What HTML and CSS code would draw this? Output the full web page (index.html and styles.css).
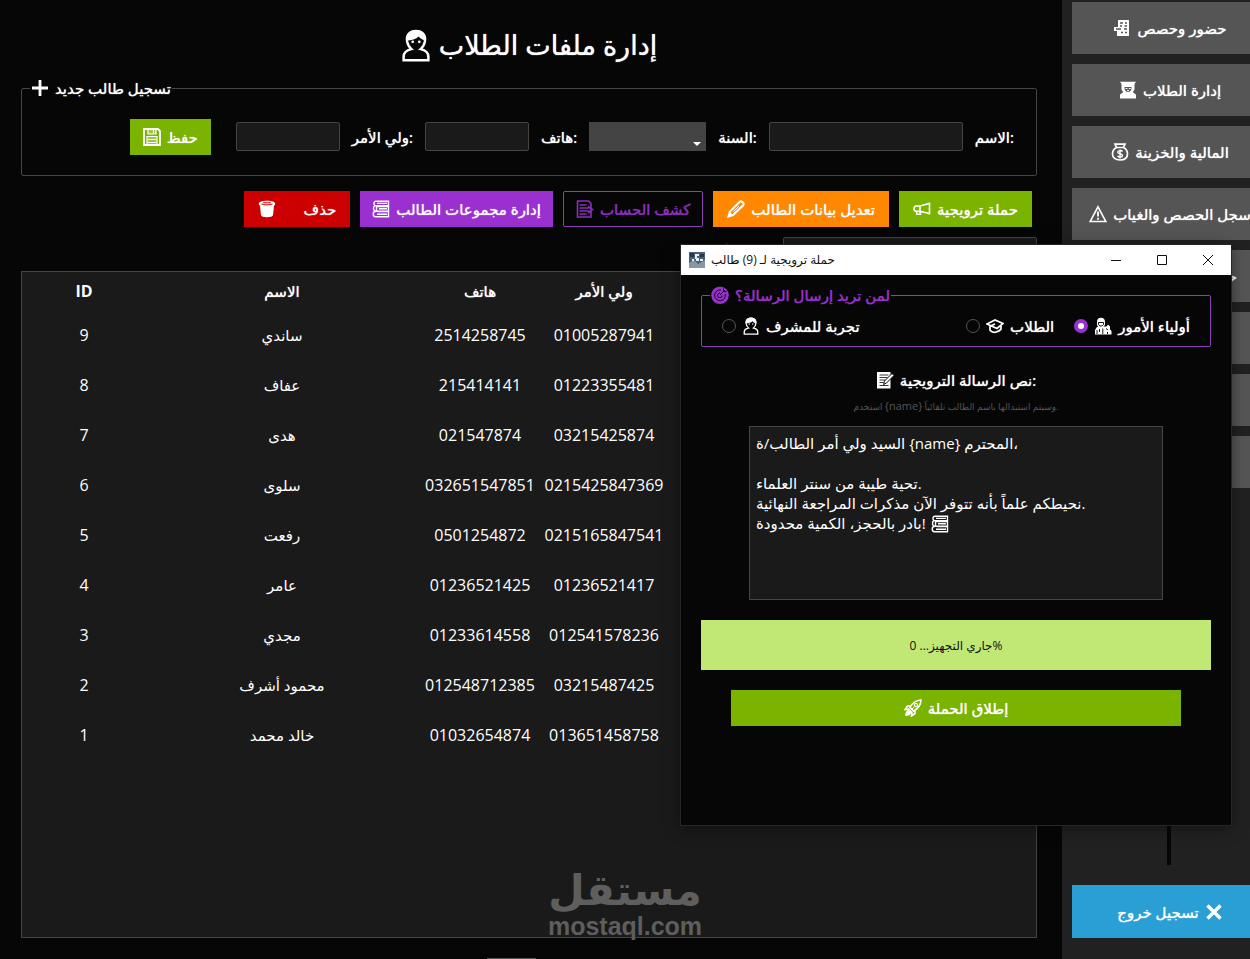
FILE: index.html
```html
<!DOCTYPE html>
<html lang="ar" dir="ltr">
<head>
    <meta charset="UTF-8">
    <meta name="viewport" content="width=device-width, initial-scale=1.0">
    <title>إدارة ملفات الطلاب</title>
    <link rel="stylesheet" href="styles.css">
</head>
<body>
    <!-- Icon set -->
    <svg class="sprite" aria-hidden="true">
        <symbol id="i-person" viewBox="0 0 18 20">
            <path d="M3.600 7.500C3 3.500 5.500 1.200 9 1.200s6 2.300 5.400 6.300c-.4 2.200-1.400 3.700-2.600 4.700 2.800.6 4.700 2 4.700 4.600v2.200H1.500v-2.200c0-2.600 1.900-4 4.700-4.600-1.200-1-2.200-2.500-2.600-4.700z" fill="none" stroke="currentColor" stroke-width="1.500"/>
            <path d="M3 7C2.600 3 5.500.6 9 .6s6.400 2.400 6 6.400c-1.800-.3-3.400-1-4.400-2.400C9 6.200 6.500 7 3 7z" fill="currentColor"/>
            <circle cx="7" cy="7.800" r=".8" fill="currentColor"/><circle cx="11" cy="7.800" r=".8" fill="currentColor"/>
        </symbol>
        <symbol id="i-plus" viewBox="0 0 18 18"><path d="M9 1v16M1 9h16" stroke="currentColor" stroke-width="2.800"/></symbol>
        <symbol id="i-save" viewBox="0 0 18 18">
            <path d="M1 1h14l2 2v14H1z" fill="none" stroke="currentColor" stroke-width="1.800"/>
            <path d="M5 1h8v5H5zM4 8h10v9H4z" fill="currentColor" fill-opacity=".25"/>
            <path d="M5 1v5h8V1M10.500 2v3M4 17V8.500h10V17M5 11.500h8M5 14.500h8" fill="none" stroke="currentColor" stroke-width="1.200"/>
        </symbol>
        <symbol id="i-horn" viewBox="0 0 18 18">
            <path d="M16.500 2.500v12M16 3.500L7 6H3.500Q1 6.200 1 8.700t2.500 2.600H7l9 2.200M7 6v5.300M3.300 11.300l.7 3h3.500l-.7-3" fill="none" stroke="currentColor" stroke-width="1.600"/>
        </symbol>
        <symbol id="i-pencil" viewBox="0 0 18 18">
            <path d="M1.500 16.500l1.300-4.800L12.500 2q1.500-1.300 2.800 0l.7.700q1.300 1.400 0 2.800L6 15z" fill="none" stroke="currentColor" stroke-width="2"/>
            <path d="M1 17l1.500-5L6 15z" fill="currentColor"/>
            <path d="M6.500 11.500L12 6" stroke="currentColor" stroke-width="1"/>
        </symbol>
        <symbol id="i-sheet" viewBox="0 0 18 18">
            <path d="M3 1h9.500l2.500 2.500V17H1.500V1zM3.500 5h7M3.500 8h9M3.500 11h9M3.500 14h7M12 6.500l4.500 3L12 13" fill="none" stroke="currentColor" stroke-width="1.600"/>
        </symbol>
        <symbol id="i-books" viewBox="0 0 18 18">
            <path d="M16.500 1.200H4Q2 1.200 2 3.400t2 2.200h12.500zM16.500 6.500H4.500v4.700h12zM6 11.500h10.500V16.800H3.500Q1.200 16.500 1.200 14T3.500 11.500M2.800 5.600Q1.200 7 1.500 9t3 2.300M5 3.400h10M7 8.800h8M5 14.200h10" fill="none" stroke="currentColor" stroke-width="1.400"/>
        </symbol>
        <symbol id="i-trash" viewBox="0 0 18 18">
            <path d="M.8 3.800C.8 1.800 4 .8 9 .8s8.200 1 8.200 3c0 1-.5 1.500-1.200 2l-1 9.500c-.3 1.300-2.600 2-6 2s-5.700-.7-6-2L2 5.800c-.7-.5-1.200-1-1.200-2z" fill="currentColor"/>
            <path d="M3.500 4c2 1.200 9 1.200 11 0M5 2.800h8" fill="none" stroke="#c00" stroke-width="1"/>
        </symbol>
        <symbol id="i-search" viewBox="0 0 18 18"><circle cx="9" cy="7" r="5.500" fill="none" stroke="currentColor" stroke-width="1.600"/><path d="M13 11l4 5" stroke="currentColor" stroke-width="2"/></symbol>
        <symbol id="i-attend" viewBox="0 0 18 18">
            <path d="M5 1h11v16H4v-5H1V8h4z" fill="currentColor"/>
            <path d="M7 4h3M12 4h2M7 7h2M11.500 7H14M3 10h5M11 10h3M8 13.500h2M12 13.500h2" stroke="#555" stroke-width="1.300"/>
        </symbol>
        <symbol id="i-teacher" viewBox="0 0 18 18">
            <path d="M1 .8h16L15.500 3v5.500l-1.700 2.800L17 13.500V17.500H1v-4l3.200-2.200L2.500 8.500V3z" fill="currentColor"/>
            <path d="M5.500 6h7c.2 3-1.300 5-3.500 5S5.300 9 5.500 6z" fill="#555"/>
            <path d="M6.500 7.500h2M9.800 7.500h2M8 9.500h2" stroke="#fff" stroke-width="1"/>
        </symbol>
        <symbol id="i-money" viewBox="0 0 18 18">
            <path d="M4 1.200h10l-1.500 3.300C15 5.800 16.500 8 16.500 11c0 3.800-3 6-7.500 6s-7.500-2.200-7.500-6c0-3 1.500-5.200 4-6.500zM5 4.500h8" fill="none" stroke="currentColor" stroke-width="1.700"/>
            <path d="M11.500 8.500C10.500 7 6.700 7.300 6.700 9.200s4.800 1.200 4.800 3.200-4 2.200-5 .5M9 6.500v9" fill="none" stroke="currentColor" stroke-width="1.400"/>
        </symbol>
        <symbol id="i-warn" viewBox="0 0 18 18">
            <path d="M9 1.800L16.800 16.500H1.200z" fill="none" stroke="currentColor" stroke-width="1.600"/>
            <path d="M9 6.500v5M9 12.800v2" stroke="currentColor" stroke-width="1.800"/>
        </symbol>
        <symbol id="i-cross" viewBox="0 0 18 18"><path d="M2.500 2.500l13 13M15.500 2.500l-13 13" stroke="currentColor" stroke-width="3.400"/></symbol>
        <symbol id="i-target" viewBox="0 0 18 18">
            <circle cx="9" cy="9.200" r="8.800" fill="currentColor"/>
            <path d="M14.200 8A5.400 5.400 0 1 1 10 4M11.300 9.500A2.400 2.400 0 1 1 9 7M9 9l5-5M12.500 2.500v3h3" fill="none" stroke="#060606" stroke-width=".9"/>
        </symbol>
        <symbol id="i-parents" viewBox="0 0 18 18">
            <path d="M3 5C3 2.200 4.700.8 7 .8s4 1.400 4 4.200v3l-1.600 1.600H12.500L14 7.500l2 2v3l1.500 1.500v3.500H1V13l1.500-2.500L4 9.500 3 8z" fill="currentColor"/>
            <path d="M4.500 5.500h5v2L8 9H6L4.500 7.500zM3 13v4M5.500 12v3M8.800 11.500v5.500M12 11.500l2 1.500M13.500 15v2" fill="none" stroke="#060606" stroke-width=".9"/>
        </symbol>
        <symbol id="i-cap" viewBox="0 0 18 18">
            <path d="M1 7l8-4 8 3.500-6 5zM4 8.800v4.400q2.500 3 6 1.800 4-1 5-3V8M9 7l-5.500 2.500" fill="none" stroke="currentColor" stroke-width="1.700"/>
        </symbol>
        <symbol id="i-memo" viewBox="0 0 18 18">
            <path d="M1 1h13.500v16.500H1z" fill="currentColor"/>
            <path d="M3.500 4h9M3.500 6.500h8M3.500 9h6M3.500 11.500h4M3.500 14.500h9" stroke="#060606" stroke-width=".8"/>
            <path d="M7.500 13.500l1-3.500 7.500-7.500 2 2-7.500 7.500z" fill="currentColor" stroke="#060606" stroke-width="1"/>
        </symbol>
        <symbol id="i-rocket" viewBox="0 0 18 18">
            <path d="M6 8.500C8.500 3.500 12 1.300 17 1c-.2 5-2.500 8.500-7.500 11zM7 7H3.500L1.200 10.500 5 10M11 11v3.500L7.500 17 8 13" fill="none" stroke="currentColor" stroke-width="1.600"/>
            <path d="M5 9.500L8.500 13 5 16.500 1 17l.8-4z" fill="currentColor"/>
            <circle cx="12" cy="6" r="1.600" fill="none" stroke="currentColor" stroke-width="1.200"/><path d="M7 11l3-3" stroke="currentColor"/>
        </symbol>
        <symbol id="i-app" viewBox="0 0 16 16">
            <path d="M0 0h16v16H0z" fill="#4a6076"/>
            <path d="M0 11l5-3 4 4 7-4v8H0z" fill="#8797a5"/>
            <path d="M1 1h4v4H1zM11 2h4v3h-4z" fill="#25364a"/>
            <path d="M6 2h4v2H8v2h2v3H7V7H6zM11 7h3v2h-3zM3 7h2v2H3z" fill="#e2eef8"/>
        </symbol>
    </svg>

    <div class="app">
        <main class="main">
            <h1 class="title strong"><svg class="icon icon-lg"><use href="#i-person"/></svg>إدارة ملفات الطلاب</h1>

            <form class="register">
                <fieldset class="group">
                    <legend class="strong"><svg class="icon"><use href="#i-plus"/></svg>تسجيل طالب جديد</legend>
                    <div class="fields strong">
                        <button type="button" class="btn green save"><svg class="icon"><use href="#i-save"/></svg>حفظ</button>
                        <input type="text" id="parent" class="field"><label for="parent">ولي الأمر:</label>
                        <input type="text" id="phone" class="field"><label for="phone">هاتف:</label>
                        <span class="select-wrap"><select id="year" class="field"><option></option></select></span><label for="year">السنة:</label>
                        <input type="text" id="name" class="field wide"><label for="name">الاسم:</label>
                    </div>
                </fieldset>
            </form>

            <div class="actions strong">
                <button class="btn red delete"><svg class="icon"><use href="#i-trash"/></svg>حذف</button>
                <button class="btn purple"><svg class="icon"><use href="#i-books"/></svg>إدارة مجموعات الطالب</button>
                <button class="btn outline"><svg class="icon"><use href="#i-sheet"/></svg>كشف الحساب</button>
                <button class="btn orange"><svg class="icon"><use href="#i-pencil"/></svg>تعديل بيانات الطالب</button>
                <button class="btn green"><svg class="icon"><use href="#i-horn"/></svg>حملة ترويجية</button>
            </div>

            <div class="search">
                <label for="search"><svg class="icon"><use href="#i-search"/></svg></label>
                <input type="search" id="search" class="field">
            </div>

            <div class="panel">
                <table>
                    <colgroup><col class="c-id"><col class="c-name"><col class="c-num"><col class="c-num"><col></colgroup>
                    <thead class="strong">
                        <tr><th class="latin">ID</th><th>الاسم</th><th>هاتف</th><th>ولي الأمر</th><th></th></tr>
                    </thead>
                    <tbody>
                        <tr><td>9</td><td class="name">ساندي</td><td>2514258745</td><td>01005287941</td><td></td></tr>
                        <tr><td>8</td><td class="name">عفاف</td><td>215414141</td><td>01223355481</td><td></td></tr>
                        <tr><td>7</td><td class="name">هدى</td><td>021547874</td><td>03215425874</td><td></td></tr>
                        <tr><td>6</td><td class="name">سلوى</td><td>032651547851</td><td>0215425847369</td><td></td></tr>
                        <tr><td>5</td><td class="name">رفعت</td><td>0501254872</td><td>0215165847541</td><td></td></tr>
                        <tr><td>4</td><td class="name">عامر</td><td>01236521425</td><td>01236521417</td><td></td></tr>
                        <tr><td>3</td><td class="name">مجدي</td><td>01233614558</td><td>012541578236</td><td></td></tr>
                        <tr><td>2</td><td class="name">محمود أشرف</td><td>012548712385</td><td>03215487425</td><td></td></tr>
                        <tr><td>1</td><td class="name">خالد محمد</td><td>01032654874</td><td>013651458758</td><td></td></tr>
                    </tbody>
                </table>
            </div>
        </main>

        <aside class="sidebar strong">
            <nav class="menu">
                <button><svg class="icon"><use href="#i-attend"/></svg>حضور وحصص</button>
                <button><svg class="icon"><use href="#i-teacher"/></svg>إدارة الطلاب</button>
                <button><svg class="icon"><use href="#i-money"/></svg>المالية والخزينة</button>
                <button><svg class="icon"><use href="#i-warn"/></svg>سجل الحصص والغياب</button>
                <button class="covered">حـ</button>
                <button></button>
                <button></button>
                <button></button>
            </nav>
            <div class="track"></div>
            <button class="logout"><svg class="icon"><use href="#i-cross"/></svg>تسجيل خروج</button>
        </aside>
    </div>

    <!-- Campaign window -->
    <div class="window" role="dialog" aria-labelledby="win-title">
        <div class="titlebar">
            <svg class="app-icon"><use href="#i-app"/></svg>
            <span id="win-title">حملة ترويجية لـ (9) طالب</span>
            <button aria-label="تصغير"><svg viewBox="0 0 12 12"><path d="M1 6.500h10"/></svg></button>
            <button aria-label="تكبير"><svg viewBox="0 0 12 12"><path d="M1.500 1.500h9v9h-9z"/></svg></button>
            <button aria-label="إغلاق"><svg viewBox="0 0 12 12"><path d="M1 1l10 10M11 1L1 11"/></svg></button>
        </div>
        <form class="window-body">
            <fieldset class="group target strong">
                <legend><svg class="icon"><use href="#i-target"/></svg>لمن تريد إرسال الرسالة؟</legend>
                <div class="radios">
                    <label class="first"><input type="radio" name="to"><svg class="icon"><use href="#i-person"/></svg>تجربة للمشرف</label>
                    <label><input type="radio" name="to"><svg class="icon"><use href="#i-cap"/></svg>الطلاب</label>
                    <label><input type="radio" name="to" checked><svg class="icon"><use href="#i-parents"/></svg>أولياء الأمور</label>
                </div>
            </fieldset>

            <label class="msg-label strong" for="message"><svg class="icon"><use href="#i-memo"/></svg>نص الرسالة الترويجية:</label>
            <p class="hint">استخدم <span>{name}</span> وسيتم استبدالها باسم الطالب تلقائياً.</p>
            <div class="message">
                <textarea id="message" spellcheck="false">السيد ولي أمر الطالب/ة {name} المحترم،

تحية طيبة من سنتر العلماء.
نحيطكم علماً بأنه تتوفر الآن مذكرات المراجعة النهائية.
بادر بالحجز، الكمية محدودة!</textarea>
                <svg class="icon msg-emoji"><use href="#i-books"/></svg>
            </div>
            <div class="progress" role="progressbar" aria-valuenow="0">جاري التجهيز... 0%</div>
            <button type="button" class="btn green launch strong"><svg class="icon"><use href="#i-rocket"/></svg>إطلاق الحملة</button>
        </form>
    </div>

    <div class="watermark">
        <span class="wm-ar">مستقل</span>
        <span class="wm-en">mostaql.com</span>
    </div>
</body>
</html>
```
FILE: styles.css
```css
* {
    margin: 0;
    padding: 0;
    box-sizing: border-box;
}

body {
    background: #060606;
    color: #fff;
    font-family: "Open Sans", "DejaVu Sans", sans-serif;
    font-size: 15px;
    line-height: 20px;
    overflow: hidden;
}

button, input, select, textarea {
    font: inherit;
    color: inherit;
    border: none;
}

/* Semi-bold look, the bold face is too wide for the Arabic labels */
.strong {
    font-weight: 500;
    text-shadow: 0 0 1px currentColor;
}

.strong button {
    text-shadow: inherit;
}

.sprite {
    position: absolute;
    width: 0;
    height: 0;
}

.icon {
    width: 18px;
    height: 18px;
    flex: none;
}

.icon-lg {
    width: 30px;
    height: 33px;
}

.app {
    display: flex;
    height: 100vh;
}

/* Main area */
.main {
    position: relative;
    flex: 1;
    min-width: 0;
    display: flex;
    flex-direction: column;
    padding: 24px 25px 21px 21px;
}

.main::after {
    content: "";
    position: absolute;
    bottom: 0;
    left: 487px;
    width: 49px;
    height: 1px;
    background: #555;
}

.title {
    display: flex;
    justify-content: center;
    align-items: center;
    gap: 8px;
    height: 42px;
    font-size: 27px;
}

.register {
    margin-top: 12px;
}

.group {
    border: 1px solid #444;
    border-radius: 2px;
}

.group legend {
    display: flex;
    align-items: center;
    gap: 6px;
    height: 20px;
    margin-left: 8px;
    padding: 0 1px;
}

.fields {
    display: flex;
    align-items: center;
    justify-content: flex-end;
    gap: 12px;
    height: 77px;
    padding: 0 22px 0 8px;
}

.field {
    width: 104px;
    height: 29px;
    padding: 0 6px;
    background: #1a1a1a;
    border: 1px solid #444;
    border-radius: 2px;
}

.field.wide {
    width: 194px;
}

.select-wrap {
    position: relative;
}

select.field {
    display: block;
    width: 117px;
    background: #444;
    appearance: none;
    border-radius: 0;
}

.select-wrap::after {
    content: "";
    position: absolute;
    right: 5px;
    bottom: 5px;
    border: 4px solid transparent;
    border-top-color: #fff;
    border-bottom: none;
}

.btn {
    display: flex;
    align-items: center;
    justify-content: center;
    gap: 6px;
    height: 36px;
    padding: 0 13px;
    white-space: nowrap;
}

.green { background: #7ab300; }
.red { background: #c00; }
.purple { background: #9b30d0; }
.orange { background: #ff8800; }

.outline {
    background: none;
    border: 1px solid #8a3fb5;
    border-radius: 2px;
    color: #8a2fbf;
}

.save {
    margin-right: 13px;
}

.actions {
    display: flex;
    justify-content: flex-end;
    gap: 10px;
    margin-top: 15px;
    padding-right: 5px;
}

.actions .btn {
    padding: 0 14px;
}

.actions .outline {
    padding: 0 12px;
}

.actions .purple {
    padding: 0 12px;
}

.delete {
    width: 106px;
    justify-content: space-between;
}

.search {
    display: flex;
    justify-content: flex-end;
    align-items: center;
    gap: 47px;
    margin-top: 10px;
    color: #aaa;
}

.search .field {
    width: 254px;
}

.search .icon {
    display: block;
}

.panel {
    flex: 1;
    margin-top: 5px;
    background: #1a1a1a;
    border: 1px solid #444;
}

table {
    width: 100%;
    table-layout: fixed;
    border-collapse: collapse;
    text-align: center;
    font-size: 16px;
}

.c-id, .c-num { width: 124px; }
.c-name { width: 272px; }

th {
    height: 38px;
    font-size: 15px;
    font-weight: 500;
}

th.latin {
    font-size: 16px;
    font-weight: 700;
    text-shadow: none;
}

td {
    height: 50px;
    white-space: nowrap;
}

td.name {
    font-size: 15px;
}

/* Sidebar */
.sidebar {
    width: 188px;
    display: flex;
    flex-direction: column;
    align-items: flex-start;
    padding: 2px 0 21px 10px;
    background: #212121;
    overflow: hidden;
}

.menu {
    display: flex;
    flex-direction: column;
    gap: 10px;
}

.menu button, .logout {
    display: flex;
    align-items: center;
    justify-content: center;
    gap: 6px;
    width: 196px;
    height: 52px;
    background: #555;
    white-space: nowrap;
}

.menu .covered {
    justify-content: flex-end;
    padding-right: 31px;
}

.track {
    flex: 1;
    width: 4px;
    margin: 0 0 20px 95px;
    background: #060606;
}

.sidebar .logout {
    flex-direction: row-reverse;
    height: 53px;
    background: #2a9fd6;
}

/* Campaign window */
.window {
    position: absolute;
    top: 245px;
    right: 19px;
    width: 550px;
    height: 580px;
    background: #060606;
    box-shadow: 0 0 0 1px #262626, 0 2px 14px rgba(0, 0, 0, 0.5);
}

.titlebar {
    display: flex;
    align-items: center;
    height: 30px;
    padding-left: 8px;
    background: #fff;
    color: #111;
    font-size: 12px;
}

.titlebar span {
    flex: 1;
    margin-left: 6px;
}

.app-icon {
    width: 16px;
    height: 16px;
}

.titlebar button {
    display: grid;
    place-items: center;
    width: 46px;
    height: 30px;
    background: none;
}

.titlebar button svg {
    width: 12px;
    height: 12px;
    fill: none;
    stroke: #111;
}

.window-body {
    display: flex;
    flex-direction: column;
    align-items: center;
    padding: 10px 20px;
}

.target {
    width: 100%;
    border-color: #8a3fb5;
}

.target legend {
    color: #9b30d0;
}

.radios {
    display: flex;
    gap: 20px;
    height: 41px;
    padding: 0 20px;
}

.radios label {
    display: flex;
    align-items: center;
    gap: 6px;
}

.radios .first {
    margin-right: auto;
}

.radios input {
    appearance: none;
    width: 14px;
    height: 14px;
    border: 1px solid #555;
    border-radius: 50%;
}

.radios input:checked {
    background: #fff;
    border: 4px solid #9b30d0;
}

.msg-label {
    display: flex;
    align-items: center;
    gap: 6px;
    margin-top: 23px;
}

.hint {
    margin-top: 6px;
    color: #555;
    font-size: 9px;
}

.hint span {
    font-size: 11px;
}

.message {
    position: relative;
    width: 414px;
    height: 174px;
    margin-top: 9px;
}

.message textarea {
    display: block;
    width: 100%;
    height: 100%;
    padding: 6px;
    background: #1a1a1a;
    border: 1px solid #444;
    outline: none;
    resize: none;
}

.msg-emoji {
    position: absolute;
    left: 182px;
    top: 89px;
}

.progress {
    width: 100%;
    height: 50px;
    margin: 20px 0;
    background: #c1e875;
    color: #111;
    font-size: 12px;
    line-height: 52px;
    text-align: center;
}

.launch {
    width: 450px;
}

/* Watermark */
.watermark {
    position: absolute;
    left: 50%;
    bottom: 20px;
    transform: translateX(-50%);
    display: flex;
    flex-direction: column;
    align-items: center;
    color: #5e5e5e;
    font-weight: 700;
}

.wm-ar {
    font-size: 42px;
    line-height: 48px;
}

.wm-en {
    font-family: "Liberation Sans", sans-serif;
    font-size: 25px;
    line-height: 26px;
}
```
